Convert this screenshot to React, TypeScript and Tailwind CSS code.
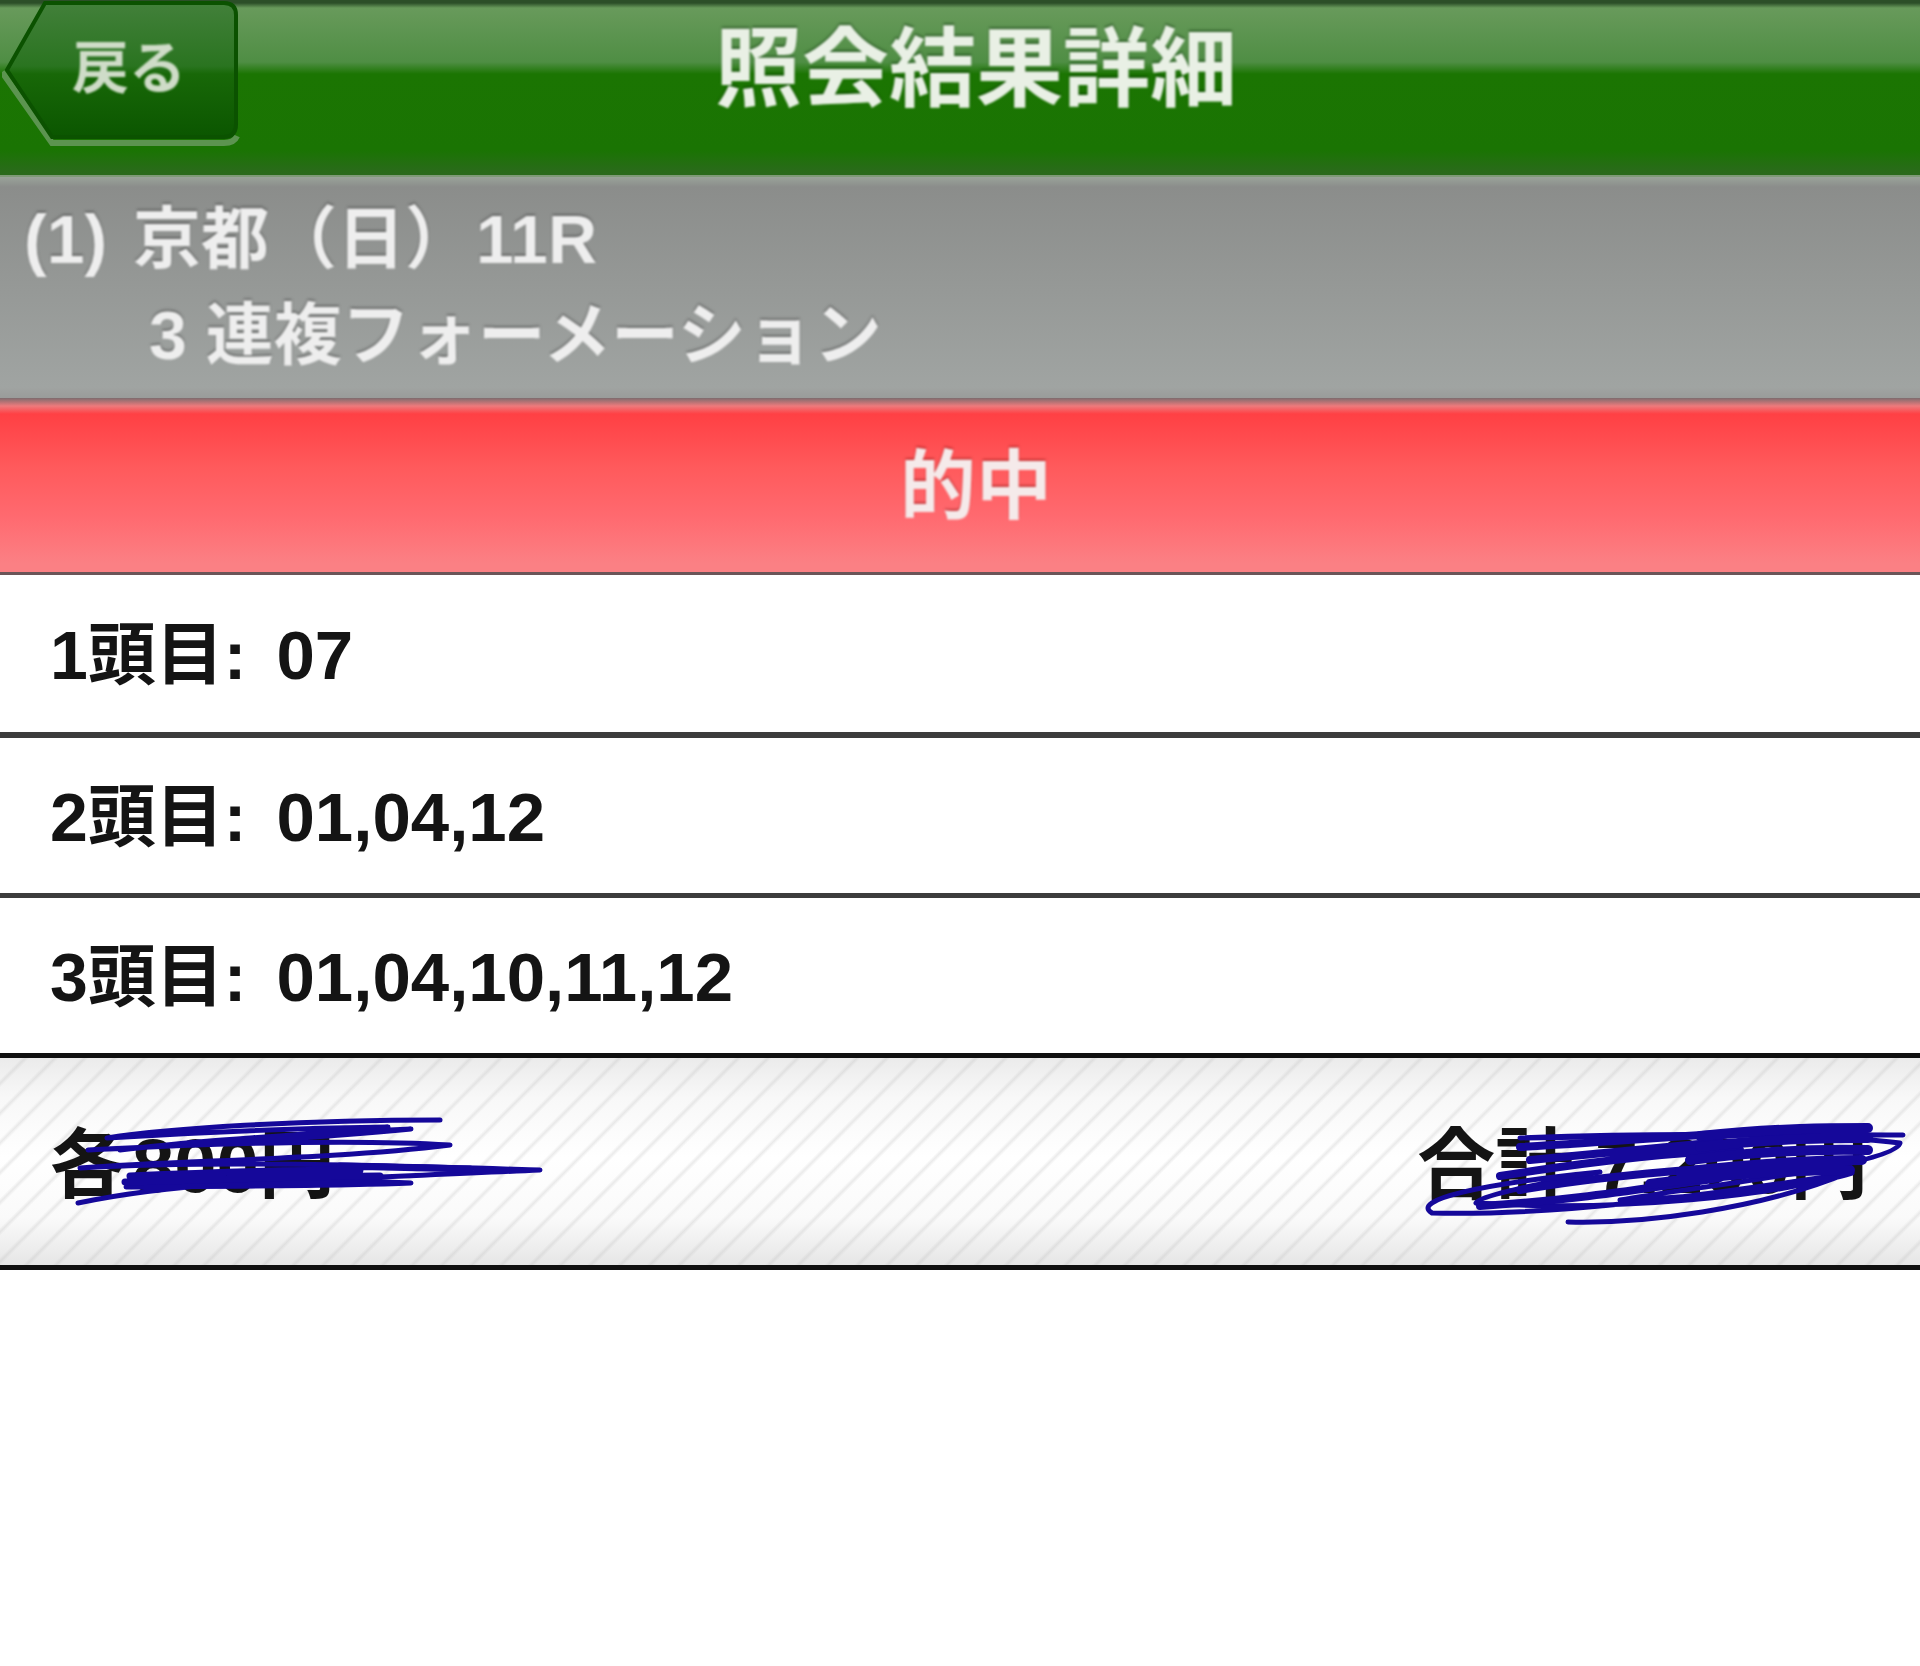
const sans = { fontFamily: '"Liberation Sans", "Noto Sans CJK JP", sans-serif' };

const rows = [
  { label: '1頭目', value: '07', size: 'h-[163px] border-[#3c3c3c] border-b-[6px]' },
  { label: '2頭目', value: '01,04,12', size: 'h-[160px] border-[#3c3c3c] border-b-[5px]' },
  { label: '3頭目', value: '01,04,10,11,12', size: 'h-[160px] border-[#101010] border-b-[5px]' },
];

function BackButton() {
  return (
    <div className="relative ml-[2px] flex h-[138px] w-[236px] items-center justify-center">
      <svg className="absolute left-0 top-0" width="240" height="148" viewBox="0 0 240 148" fill="none">
        <defs>
          <linearGradient id="backFill" x1="0" y1="0" x2="0" y2="1">
            <stop offset="0" stopColor="#42803a" />
            <stop offset="0.47" stopColor="#2a7420" />
            <stop offset="0.53" stopColor="#186808" />
            <stop offset="1" stopColor="#0b5600" />
          </linearGradient>
        </defs>
        <path d="M0 72 L50 143 H222 Q232 143 235 136" stroke="#5c9450" strokeWidth="6" />
        <path
          d="M43 3 H222 Q234 3 234 15 V124 Q234 137 222 137 H50 L5 70 Z"
          fill="url(#backFill)"
          stroke="#0b5200"
          strokeWidth="4"
        />
      </svg>
      <span className="relative ml-[18px] mt-[-2px] text-[57px] font-bold leading-none text-[#cfdcc8] blur-[1px]">戻る</span>
    </div>
  );
}

function Scribble() {
  return (
    <svg
      className="absolute inset-0 h-full w-full"
      viewBox="0 1058 1920 207"
      preserveAspectRatio="none"
      fill="none"
      stroke="#15089a"
      strokeWidth="5"
      strokeLinecap="round"
      strokeLinejoin="round"
    >
      <path d="M440 1120 C300 1120 170 1128 107 1138 C200 1132 320 1128 388 1127 C300 1135 190 1142 120 1150 C220 1138 340 1132 411 1129 C300 1140 170 1146 88 1150 C240 1142 370 1140 450 1145 C330 1160 180 1160 80 1168 C220 1160 400 1166 540 1170 C400 1176 240 1184 126 1187 C240 1186 340 1186 411 1183 C280 1176 160 1186 78 1203" />
      <path d="M125 1182 C220 1180 300 1176 380 1176 M340 1166 L470 1169 M130 1176 C220 1172 300 1170 360 1170" strokeWidth="7" />
      <path d="M1903 1135 C1780 1134 1640 1136 1520 1138 C1680 1132 1830 1134 1900 1143 C1895 1165 1700 1186 1620 1200 C1740 1196 1830 1180 1852 1173 C1700 1196 1560 1216 1432 1213 C1410 1200 1480 1184 1600 1172 C1520 1188 1480 1196 1476 1203 C1620 1212 1780 1196 1850 1172 C1760 1210 1640 1224 1568 1222" />
      <path d="M1520 1147 C1640 1140 1700 1134 1760 1132 M1500 1176 C1600 1160 1680 1152 1740 1150 M1520 1190 C1600 1176 1700 1168 1760 1166 M1530 1160 L1720 1142 M1480 1206 C1580 1200 1660 1186 1720 1178" strokeWidth="8" />
      <path d="M1700 1136 C1780 1128 1830 1128 1868 1128 M1700 1147 C1780 1138 1830 1138 1868 1138 M1690 1160 C1770 1150 1830 1149 1868 1150 M1680 1172 C1770 1162 1820 1160 1862 1160 M1650 1184 C1740 1172 1800 1170 1850 1170" strokeWidth="10" />
    </svg>
  );
}

export default function App() {
  return (
    <div className="min-h-[1666px] bg-white" style={sans}>
      <header className="grid h-[177px] grid-cols-[1fr_auto_1fr] items-start border-b-[2px] border-[#7f9a78] bg-[linear-gradient(to_bottom,#2c4f28_0,#2c4f28_3px,#689a5b_8px,#4f8e44_62px,#1b7502_74px,#1a7403_150px,#2b6a1c_173px)]">
        <BackButton />
        <h1 className="ml-[32px] mt-[26px] text-[87px] font-bold leading-none text-[#e9f0e5] blur-[1px] [text-shadow:0_-2px_2px_rgba(0,40,0,0.45)]">照会結果詳細</h1>
        <div />
      </header>

      <section className="h-[221px] bg-[linear-gradient(to_bottom,#9aa39a_0,#8b8d8b_10px,#a0a4a2_210px,#9a9c9a_221px)] pl-[24px] pt-[14px] text-[68px] font-bold leading-[96px] text-[#eeeeee] [text-shadow:0_-2px_2px_rgba(50,50,50,0.45)]">
        <p className="blur-[1px]">(1) <span className="ml-[7px]">京都（日）</span><span className="ml-[3px]">11R</span></p>
        <p className="pl-[125px] blur-[1px]">3 連複フォーメーション</p>
      </section>

      <section className="flex h-[177px] items-center justify-center border-b-[3px] border-[#6b5558] bg-[linear-gradient(to_bottom,#7d6c6e_0,#ee7a7c_8px,#ff4044_16px,#ff5a5c_70px,#ff6a70_120px,#fb8084_165px)] pl-[32px] pt-[4px] text-[76px] font-bold leading-none text-[#f5eaea]">
        <span className="blur-[1px] [text-shadow:0_-2px_2px_rgba(120,0,0,0.4)]">的中</span>
      </section>

      <ul className="text-[68px] font-bold leading-none text-[#141414]">
        {rows.map((row) => (
          <li key={row.label} className={`flex items-center pl-[50px] pt-[3px] ${row.size}`}>
            <span>{row.label}</span>
            <span className="mr-[30px]">:</span>
            <span className="text-[69px]">{row.value}</span>
          </li>
        ))}
      </ul>

      <footer className="relative flex h-[212px] items-center justify-between border-b-[5px] border-[#101010] bg-[repeating-linear-gradient(135deg,transparent_0,transparent_15px,rgba(190,190,190,0.3)_18px,transparent_21px),linear-gradient(to_bottom,#ebebeb_0,#f8f8f8_40px,#ffffff_100px,#fafafa_160px,#e6e6e6_207px)] pl-[50px] pr-[52px] pt-[9px] text-[76px] font-bold leading-none text-[#141414]">
        <span>各<span className="ml-[6px]">800円</span></span>
        <span className="text-[78px]">合計 7,200円</span>
        <Scribble />
      </footer>
    </div>
  );
}
